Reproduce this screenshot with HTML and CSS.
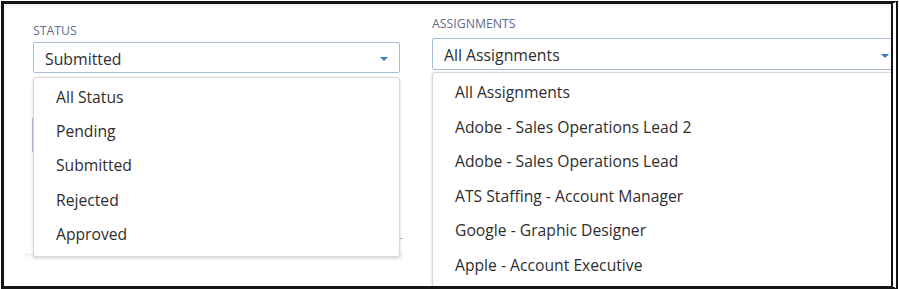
FILE: index.html
```html
<!DOCTYPE HTML>
<html>
  <head>
    <link rel="stylesheet" href="styles.css">
  </head>
  <body>
    <div class="frame">
      <div class="filters">

        <div class="column status_col">
          <p class="field_label">Status</p>
          <div class="select_wrap">
            <div class="select">
              <span>Submitted</span>
              <span class="caret"></span>
            </div>
            <ul class="menu">
              <li>All Status</li>
              <li>Pending</li>
              <li>Submitted</li>
              <li>Rejected</li>
              <li>Approved</li>
            </ul>
          </div>
          <div class="behind">
            <div class="behind_box"></div>
            <div class="behind_line"></div>
            <div class="behind_shade"></div>
          </div>
        </div>

        <div class="column assign_col">
          <p class="field_label">Assignments</p>
          <div class="select_wrap">
            <div class="select">
              <span>All Assignments</span>
              <span class="caret"></span>
            </div>
            <ul class="menu menu_long">
              <li>All Assignments</li>
              <li>Adobe - Sales Operations Lead 2</li>
              <li>Adobe - Sales Operations Lead</li>
              <li>ATS Staffing - Account Manager</li>
              <li>Google - Graphic Designer</li>
              <li>Apple - Account Executive</li>
            </ul>
          </div>
        </div>

      </div>
    </div>
  </body>
</html>
```

FILE: styles.css
```css
* {
  box-sizing: border-box;
}

body {
  margin: 0;
  background-color: #fff;
  font-family: "Open Sans", "Liberation Sans", sans-serif;
}

.frame {
  width: 897px;
  height: 288px;
  margin: 1px 0 0 1px;
  border: 3px solid #151515;
  border-right: 7px double #151515;
  background-color: #fff;
  box-shadow: inset 0 3px 4px rgba(0, 0, 0, 0.06);
  overflow: hidden;
}

.filters {
  display: flex;
  gap: 32px;
  padding-left: 29px;
}

.column {
  display: flex;
  flex-direction: column;
}

.status_col {
  width: 367px;
  padding-top: 19px;
}

.assign_col {
  width: 469px;
  flex-shrink: 0;
  padding-top: 12px;
}

.field_label {
  margin: 0 0 4px 0;
  font-size: 12.3px;
  line-height: 15px;
  text-transform: uppercase;
  color: #5d6c8c;
}

.assign_col .field_label {
  margin-bottom: 7px;
}

.select_wrap {
  position: relative;
}

.select {
  display: flex;
  align-items: center;
  justify-content: space-between;
  height: 31px;
  padding: 2px 11px 0 11px;
  border: 1px solid #a8bcd8;
  border-radius: 2px;
  font-size: 15.8px;
  color: #2e2e2e;
}

.assign_col .select {
  height: 32px;
}

.caret {
  width: 0;
  height: 0;
  border-left: 4px solid transparent;
  border-right: 4px solid transparent;
  border-top: 4px solid #3a7abd;
  margin-top: 1px;
}

.menu {
  position: absolute;
  top: 35px;
  left: 0;
  width: 100%;
  margin: 0;
  padding: 2px 0 5px 0;
  list-style: none;
  background-color: #fff;
  border: 1px solid #d9d9d9;
  border-radius: 3px;
  box-shadow: 0 1px 3px rgba(0, 0, 0, 0.18);
  z-index: 2;
}

.menu li {
  height: 34.2px;
  line-height: 34px;
  padding-left: 22px;
  font-size: 15.7px;
  color: #2e2e2e;
}

.menu_long {
  top: 34px;
  border-right: none;
  border-bottom: none;
  border-radius: 3px 0 0 0;
  height: 230px;
}

.menu_long li {
  height: 34.5px;
  line-height: 34.5px;
}

.behind {
  position: relative;
  height: 190px;
}

.behind_box {
  margin: 45px 0 0 -1px;
  height: 34px;
  border-left: 2px solid #b4c2d6;
}

.behind_line {
  margin: 86px 0 0 0;
  width: 370px;
  border-top: 1px solid #a8bcd8;
}

.behind_shade {
  margin: 14px 0 0 -8px;
  width: 378px;
  height: 8px;
  background: linear-gradient(#f1f1f1, #fff);
}
```
